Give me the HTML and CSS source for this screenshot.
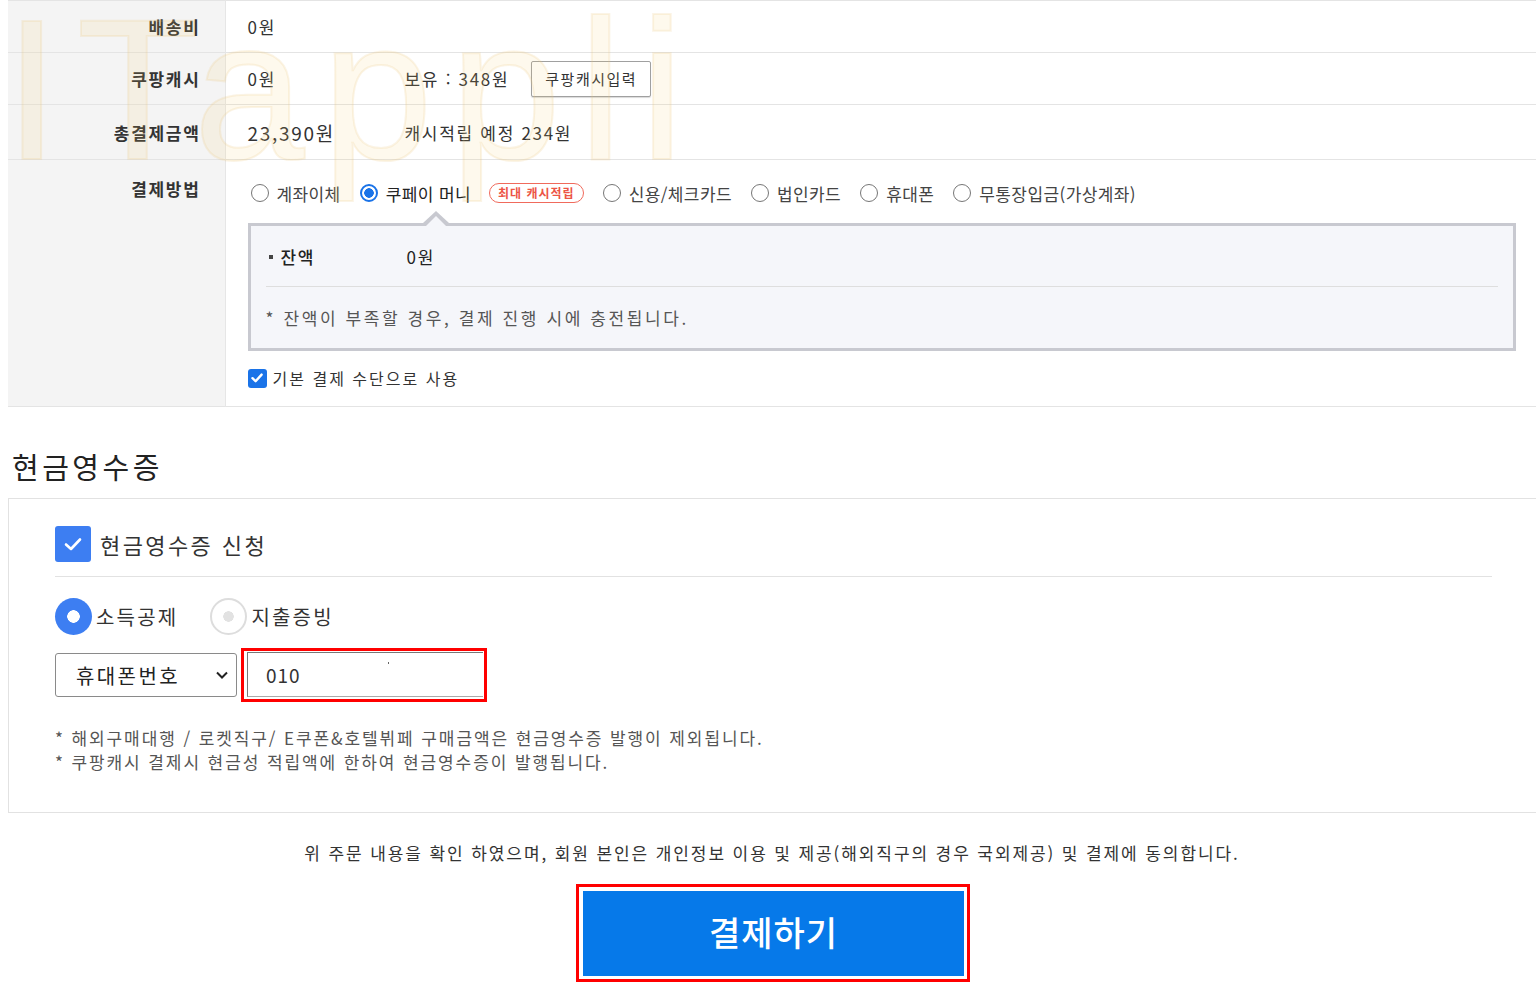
FILE: index.html
```html
<!DOCTYPE html>
<html lang="ko">
<head>
    <meta charset="UTF-8">
    <meta name="viewport" content="width=device-width, initial-scale=1.0">
    <link rel="stylesheet" href="styles.css">
    <title>결제</title>
</head>
<body>
    <div class="page">
        <div class="watermark">ITappli</div>

        <table class="pay-table">
            <tr class="row-fee">
                <th>배송비</th>
                <td>0원</td>
            </tr>
            <tr class="row-cash">
                <th>쿠팡캐시</th>
                <td>
                    <div class="cell-row">
                        <span class="col-a">0원</span>
                        <span>보유 : 348원</span>
                        <button class="btn-cash">쿠팡캐시입력</button>
                    </div>
                </td>
            </tr>
            <tr class="row-total">
                <th>총결제금액</th>
                <td>
                    <div class="cell-row">
                        <span class="col-a total">23,390원</span>
                        <span>캐시적립 예정 234원</span>
                    </div>
                </td>
            </tr>
            <tr class="row-method">
                <th>결제방법</th>
                <td>
                    <div class="methods">
                        <label class="method"><span class="radio"></span>계좌이체</label>
                        <label class="method on"><span class="radio"></span>쿠페이 머니<span class="badge">최대 캐시적립</span></label>
                        <label class="method"><span class="radio"></span>신용/체크카드</label>
                        <label class="method"><span class="radio"></span>법인카드</label>
                        <label class="method"><span class="radio"></span>휴대폰</label>
                        <label class="method"><span class="radio"></span>무통장입금(가상계좌)</label>
                    </div>
                    <div class="money-box">
                        <div class="money-row">
                            <span class="bullet"></span>
                            <span class="money-label">잔액</span>
                            <span>0원</span>
                        </div>
                        <div class="money-note">* 잔액이 부족할 경우, 결제 진행 시에 충전됩니다.</div>
                    </div>
                    <label class="default-use">
                        <span class="check-sm">
                            <svg width="14" height="14" viewBox="0 0 14 14"><path d="M2.5 7.2 L5.6 10.2 L11.6 3.6" fill="none" stroke="#fff" stroke-width="2.4" stroke-linecap="round" stroke-linejoin="round"/></svg>
                        </span>
                        기본 결제 수단으로 사용
                    </label>
                </td>
            </tr>
        </table>

        <h2 class="receipt-title">현금영수증</h2>

        <div class="receipt">
            <div class="receipt-head">
                <span class="check-lg">
                    <svg width="24" height="24" viewBox="0 0 24 24"><path d="M5 12.5 L10 17 L19 7.5" fill="none" stroke="#fff" stroke-width="2.6" stroke-linecap="round" stroke-linejoin="round"/></svg>
                </span>
                현금영수증 신청
            </div>
            <div class="receipt-types">
                <label class="rtype on"><span class="rbig"></span>소득공제</label>
                <label class="rtype"><span class="rbig"></span>지출증빙</label>
            </div>
            <div class="receipt-inputs">
                <div class="select">
                    <span>휴대폰번호</span>
                    <svg width="14" height="10" viewBox="0 0 14 10"><path d="M2 2.5 L7 7.5 L12 2.5" fill="none" stroke="#222" stroke-width="2"/></svg>
                </div>
                <div class="phone-frame">
                    <div class="phone-input">010<span class="caret-dot"></span></div>
                </div>
            </div>
            <div class="receipt-notes">
                <p>* 해외구매대행 / 로켓직구/ E쿠폰&amp;호텔뷔페 구매금액은 현금영수증 발행이 제외됩니다.</p>
                <p>* 쿠팡캐시 결제시 현금성 적립액에 한하여 현금영수증이 발행됩니다.</p>
            </div>
        </div>

        <p class="agree">위 주문 내용을 확인 하였으며, 회원 본인은 개인정보 이용 및 제공(해외직구의 경우 국외제공) 및 결제에 동의합니다.</p>

        <div class="pay-wrap">
            <div class="pay-frame">
                <button class="pay-btn">결제하기</button>
            </div>
        </div>
    </div>
</body>
</html>
```

FILE: styles.css
```css
*{
    margin: 0;
    padding: 0;
    box-sizing: border-box;
}
html, body{
    overflow: hidden;
}
body{
    background: #fff;
    font-family: "Noto Sans CJK KR", "Noto Sans", sans-serif;
    color: #333;
    width: 1536px;
    letter-spacing: 1.7px;
}
.page{
    position: relative;
    padding-left: 8px;
}
.watermark{
    position: absolute;
    left: 4px;
    top: 0;
    font-family: "Liberation Sans", sans-serif;
    font-size: 200px;
    letter-spacing: 17px;
    color: rgba(250, 205, 110, 0.12);
    -webkit-text-stroke: 2px rgba(235, 200, 130, 0.2);
    pointer-events: none;
    z-index: 5;
    line-height: 0.9;
}

/* payment table */
.pay-table{
    width: 1528px;
    border-collapse: collapse;
    border-top: 1px solid #e4e4e4;
    font-size: 17px;
}
.pay-table tr{
    border-bottom: 1px solid #e4e4e4;
}
.pay-table th{
    width: 217px;
    background: #f4f4f4;
    border-right: 1px solid #e6e6e6;
    text-align: right;
    padding-right: 24px;
    font-weight: bold;
    font-size: 17px;
    color: #333;
}
.pay-table td{
    padding-left: 22px;
    color: #333;
}
.row-fee{ height: 52px; }
.row-cash{ height: 52px; }
.row-total{ height: 55px; }
.row-method th, .row-method td{
    vertical-align: top;
}
.row-method th{
    padding-top: 16px;
}
.row-method td{
    padding-top: 22px;
    padding-right: 20px;
    padding-bottom: 16px;
}
.cell-row{
    display: flex;
    align-items: center;
}
.col-a{
    width: 157px;
}
.total{
    font-size: 19px;
}
.btn-cash{
    margin-left: 22px;
    height: 36px;
    padding: 0 13px;
    background: #fff;
    border: 1px solid #a0a0a0;
    border-radius: 2px;
    box-shadow: 0 1px 1px rgba(0,0,0,0.15);
    font-family: inherit;
    font-size: 15px;
    letter-spacing: 1.5px;
    color: #333;
}

/* methods */
.methods{
    display: flex;
    align-items: center;
    gap: 16px;
    height: 22px;
    font-size: 17px;
    letter-spacing: 0.4px;
    color: #444;
}
.method{
    display: flex;
    align-items: center;
    gap: 8px;
}
.radio{
    width: 18px;
    height: 18px;
    border-radius: 50%;
    border: 1px solid #767676;
    background: #fff;
    margin-left: 3px;
}
.method.on{
    color: #222;
}
.method.on .radio{
    border: 2px solid #1a73e8;
    background: radial-gradient(circle, #1a73e8 0 4.5px, #fff 5px);
}
.badge{
    margin-left: 10px;
    height: 20px;
    padding: 0 8px;
    border: 1.5px solid #f06a5c;
    border-radius: 10px;
    color: #ec5546;
    font-size: 12px;
    font-weight: bold;
    letter-spacing: 1px;
    line-height: 17px;
}

.money-box{
    position: relative;
    margin-top: 19px;
    border: 3px solid #c8c9d0;
    background: #f5f6fa;
    padding: 0 15px;
}
.money-box::before,
.money-box::after{
    content: "";
    position: absolute;
    border-style: solid;
    border-color: transparent;
}
.money-box::before{
    left: 172px;
    top: -15px;
    border-width: 0 13px 12px 13px;
    border-bottom-color: #c8c9d0;
}
.money-box::after{
    left: 175px;
    top: -10px;
    border-width: 0 10px 10px 10px;
    border-bottom-color: #f5f6fa;
}
.money-row{
    height: 61px;
    display: flex;
    align-items: center;
    border-bottom: 1px solid #dedede;
    font-size: 17px;
    color: #222;
}
.bullet{
    width: 4px;
    height: 4px;
    background: #444;
    margin: 2px 8px 0 3px;
}
.money-label{
    width: 126px;
    font-weight: 500;
}
.money-note{
    height: 61px;
    display: flex;
    align-items: center;
    font-size: 17px;
    letter-spacing: 2.6px;
    color: #555;
}
.default-use{
    display: flex;
    align-items: center;
    gap: 6px;
    margin-top: 15px;
    font-size: 16px;
    letter-spacing: 2px;
    color: #333;
}
.check-sm{
    width: 19px;
    height: 19px;
    border-radius: 3px;
    background: #1a73e8;
    display: flex;
    align-items: center;
    justify-content: center;
}

/* cash receipt */
.receipt-title{
    font-size: 29px;
    font-weight: normal;
    letter-spacing: 3.5px;
    color: #222;
    margin: 42px 0 0 4px;
    line-height: 35px;
}
.receipt{
    margin-top: 14px;
    width: 1530px;
    height: 315px;
    border: 1px solid #e2e2e2;
    border-right: none;
    padding: 0 46px;
}
.receipt-head{
    display: flex;
    align-items: center;
    gap: 9px;
    margin-top: 27px;
    padding-bottom: 14px;
    border-bottom: 1px solid #e2e2e2;
    font-size: 22px;
    letter-spacing: 2.4px;
    color: #333;
}
.check-lg{
    width: 36px;
    height: 36px;
    border-radius: 3px;
    background: #3d7ef2;
    display: flex;
    align-items: center;
    justify-content: center;
}
.receipt-types{
    display: flex;
    align-items: center;
    gap: 32px;
    margin-top: 21px;
    font-size: 20px;
    letter-spacing: 2.2px;
    color: #333;
}
.rtype{
    display: flex;
    align-items: center;
    gap: 4px;
}
.rbig{
    width: 37px;
    height: 37px;
    border-radius: 50%;
    border: 2px solid #ddd;
    background: radial-gradient(circle, #e2e2e2 0 5px, #fff 5.5px);
}
.rtype.on .rbig{
    border: none;
    background: radial-gradient(circle, #fff 0 6px, #3d7ef2 6.5px);
}
.receipt-inputs{
    display: flex;
    align-items: center;
    gap: 4px;
    margin-top: 13px;
}
.select{
    width: 182px;
    height: 44px;
    border: 1px solid #8a8a8a;
    border-radius: 3px;
    display: flex;
    align-items: center;
    justify-content: space-between;
    padding: 0 7px 0 20px;
    font-size: 20px;
    letter-spacing: 2.4px;
    color: #222;
}
.phone-frame{
    width: 246px;
    height: 54px;
    border: 3px solid #f00;
    padding: 1px 1px 2px 3px;
}
.phone-input{
    position: relative;
    height: 100%;
    border-top: 1px solid #777;
    border-left: 1px solid #777;
    border-bottom: 1px solid #aaa;
    padding: 8px 0 0 18px;
    font-size: 19px;
    letter-spacing: 1px;
    color: #333;
}
.caret-dot{
    position: absolute;
    left: 140px;
    top: 9px;
    width: 1px;
    height: 2px;
    background: #666;
}
.receipt-notes{
    margin-top: 24px;
    font-size: 17px;
    line-height: 24px;
    letter-spacing: 1.9px;
    color: #555;
}

/* bottom */
.agree{
    text-align: center;
    font-size: 17px;
    letter-spacing: 1.9px;
    color: #333;
    margin-top: 28px;
    line-height: 24px;
}
.pay-wrap{
    display: flex;
    justify-content: center;
    margin-top: 19px;
}
.pay-frame{
    width: 394px;
    height: 98px;
    border: 3px solid #f00;
    padding: 4px 3px 3px 4px;
    margin-left: 2px;
}
.pay-btn{
    width: 100%;
    height: 100%;
    border: none;
    background: #0679e9;
    color: #fff;
    font-family: inherit;
    font-size: 34px;
    font-weight: 500;
    letter-spacing: 1px;
    padding-bottom: 4px;
}
```
